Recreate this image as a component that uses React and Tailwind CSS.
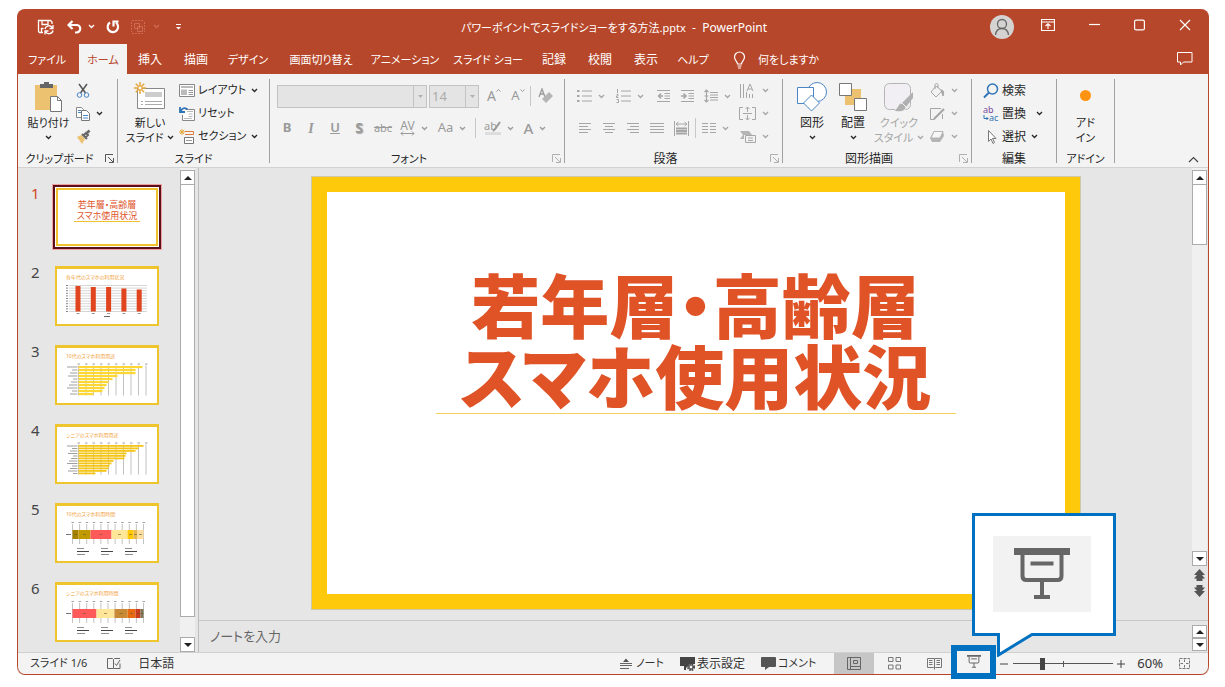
import { Fragment } from 'react';

const TABS = [
  ['ファイル', 'w-14 text-[11px]'],
  ['ホーム', 'mx-1 w-12 bg-[#f3f3f3] text-[11px] text-[#b7472a]'],
  ['挿入', '-ml-1 w-[46px]'],
  ['描画', 'w-[46px]'],
  ['デザイン', 'w-[58px] text-[11px]'],
  ['画面切り替え', 'w-[88px] text-[11px]'],
  ['アニメーション', 'w-20 text-[11px]'],
  ['スライド ショー', 'w-[86px] text-[11px]'],
  ['記録', 'w-[46px]'],
  ['校閲', 'w-[46px]'],
  ['表示', 'w-[46px]'],
  ['ヘルプ', 'w-12 text-[11px]'],
];

const SLIDES = [
  { id: 1, kind: 'title' },
  { id: 2, kind: 'column', title: '各年代のスマホの利用状況' },
  { id: 3, kind: 'bar', title: '10代のスマホ利用用途', color: '#fdd835', values: [64, 57, 57, 39, 34, 30, 28, 26, 24, 15] },
  { id: 4, kind: 'bar', title: 'シニアのスマホ利用用途', color: '#f5c518', values: [65, 60, 57, 48, 47, 46, 35, 33, 31, 30, 28, 17] },
  {
    id: 5,
    kind: 'stack',
    title: '10代のスマホ利用時間',
    values: [[6, '#a58300'], [12, '#c09a00'], [21, '#ff5a5a'], [16, '#ffe699'], [6, '#ffc800'], [4, '#e8b84a'], [6, '#ffdf9e']],
  },
  {
    id: 6,
    kind: 'stack',
    title: 'シニアのスマホ利用時間',
    values: [[24, '#ff5a5a'], [18, '#ffe699'], [13, '#c88a35'], [8, '#e86a10'], [5, '#cc3a1c'], [3, '#80765a']],
  },
];

function Svg({ w = 16, h = 16, children, className = '' }) {
  return (
    <svg width={w} height={h} viewBox={`0 0 ${w} ${h}`} fill="none" stroke="currentColor" className={`shrink-0 ${className}`} aria-hidden="true">
      {children}
    </svg>
  );
}

function Chevron({ className = '' }) {
  return (
    <Svg w={7} h={5} className={className}>
      <path d="M1 1l2.500 2.500L6 1" strokeWidth="1.300" />
    </Svg>
  );
}

function Launcher({ label, dim }) {
  return (
    <button aria-label={label} className={`absolute right-[3px] bottom-0 ${dim ? 'text-[#b0b0b0]' : 'text-[#555]'}`}>
      <Svg w={9} h={9}>
        <path d="M.5 8V.5H8M3 3l5 5M8.500 4v4.500H4" />
      </Svg>
    </button>
  );
}

function Group({ label, width, launcher, dim, children }) {
  return (
    <section className={`relative flex shrink-0 flex-col border-r border-[#a0a0a0] ${width}`}>
      <div className="flex h-[77px]">{children}</div>
      <h2 className={`h-2 text-center leading-2 whitespace-nowrap ${launcher ? 'pr-4' : ''}`}>{label}</h2>
      {launcher && <Launcher label={`${label}の設定`} dim={dim} />}
    </section>
  );
}

function BigButton({ icon, lines, chevron, inlineChevron, className = '' }) {
  return (
    <button className={`flex flex-col items-center leading-[15px] whitespace-nowrap ${className}`}>
      <span className="flex h-9 items-center">{icon}</span>
      {lines.map((line, i) => (
        <span key={line} className="flex items-center gap-1">
          {line}
          {inlineChevron && i === lines.length - 1 && <Chevron />}
        </span>
      ))}
      {chevron && <Chevron className="mt-[5px]" />}
    </button>
  );
}

function RowButton({ icon, text, chevron, gap = 'gap-[3px]', className = '' }) {
  return (
    <button className={`flex h-[23px] items-center whitespace-nowrap ${gap} ${className}`}>
      {icon}
      {text}
      {chevron && <Chevron className="ml-[2px]" />}
    </button>
  );
}

function ToolButton({ label, width = 'w-6', chevron, children }) {
  return (
    <button aria-label={label} className={`flex h-6 shrink-0 items-center justify-center gap-[6px] ${width}`}>
      {children}
      {chevron && <Chevron />}
    </button>
  );
}

function Lines({ rows }) {
  return (
    <Svg w={14} h={14}>
      {rows.map(([x1, x2], i) => (
        <path key={i} d={`M${x1} ${2.5 + i * 3}H${x2}`} />
      ))}
    </Svg>
  );
}

function Header() {
  return (
    <header className="rounded-t-lg bg-[#b7472a] text-white">
      <div className="flex h-[35px] items-center">
        <div className="flex flex-1 items-center pl-5">
          <button aria-label="上書き保存" className="w-[18px]">
            <Svg w={18} h={18}>
              <path d="M6 14.500H2.500L1.500 13.500V2.500h12l1.500 1.500V6M5 2.500v4h6v-4M4.500 14.500v-4h2" strokeWidth="1.300" />
              <path d="M8 11a4 4 0 0 1 7.500-1M16 7v3.500h-3.500M16 12.500a4 4 0 0 1-7.500 1M8 16.500v-3.500h3.500" strokeWidth="1.300" />
            </Svg>
          </button>
          <button aria-label="元に戻す" className="ml-3 flex items-center gap-[6px]">
            <Svg w={15} h={16}>
              <path d="M5.500 2L1.500 6l4 4M2 6h7.500a3.700 3.700 0 0 1 0 7.500H8" strokeWidth="2.200" />
            </Svg>
            <Chevron />
          </button>
          <button aria-label="繰り返し" className="ml-[10px]">
            <Svg w={16} h={16}>
              <path d="M5 3.500a5.200 5.200 0 1 0 6 .2M13.500 2.500H8.500v5" strokeWidth="2.200" />
            </Svg>
          </button>
          <button aria-label="グループ化" className="ml-2 flex items-center gap-[6px] text-[#cf6a54]">
            <Svg w={18} h={16}>
              <path d="M3 1.500h12M3 14.500h12M2.500 3v10M15.500 3v10" strokeDasharray="2 1" />
              <path d="M5.500 4.500h5v5h-5zM8.500 7.500h5v5h-5z" />
            </Svg>
            <Chevron />
          </button>
          <button aria-label="クイック アクセス ツール バーのカスタマイズ" className="ml-[15px]">
            <Svg w={7} h={8}>
              <path d="M1 1.500h5" />
              <path d="M1 4h5L3.500 6.500z" fill="currentColor" stroke="none" />
            </Svg>
          </button>
        </div>
        <h1 className="flex items-baseline pt-[2px] whitespace-pre">
          <span className="text-[11px]">パワーポイントでスライドショーをする方法.pptx</span>
          {'  -  PowerPoint'}
        </h1>
        <div className="flex flex-1 items-center justify-end pr-[18px]">
          <button aria-label="アカウント" className="mr-[27px] flex size-6 justify-center rounded-full bg-[#d5d3d2] text-[#666]">
            <Svg w={24} h={24}>
              <circle cx="12" cy="9" r="4.500" strokeWidth="1.300" />
              <path d="M5.500 20c.5-4.500 3-6.500 6.500-6.500s6 2 6.500 6.500" strokeWidth="1.300" />
            </Svg>
          </button>
          <button aria-label="リボンの表示オプション" className="mr-[34px]">
            <Svg w={14} h={12} className="-mt-1">
              <path d="M.5.500h13v11H.5zM.5 3h13M7 10V5M4.500 7L7 4.800 9.500 7" strokeWidth="1.200" />
            </Svg>
          </button>
          <button aria-label="最小化" className="mr-[34px]">
            <Svg w={11} h={12} className="-mt-1">
              <path d="M0 5.500h11" strokeWidth="1.200" />
            </Svg>
          </button>
          <button aria-label="最大化" className="mr-[34px]">
            <Svg w={11} h={12} className="-mt-1">
              <rect x=".6" y="1.100" width="9.800" height="9.800" rx="1.500" strokeWidth="1.200" />
            </Svg>
          </button>
          <button aria-label="閉じる">
            <Svg w={12} h={12} className="-mt-1">
              <path d="M1 1l10 10M11 1L1 11" strokeWidth="1.200" />
            </Svg>
          </button>
        </div>
      </div>
      <nav className="flex h-[30px] items-stretch pl-[2px]">
        {TABS.map(([tab, style]) => (
          <button key={tab} className={`pt-[2px] whitespace-nowrap ${style}`}>
            {tab}
          </button>
        ))}
        <button className="ml-4 flex items-center gap-3 pt-[2px] text-[11px]">
          <Svg w={13} h={18}>
            <path d="M4.500 13c0-2.500-3-3.500-3-7a5 5 0 0 1 10 0c0 3.500-3 4.500-3 7zM4.500 15h4M5 17h3" strokeWidth="1.200" />
          </Svg>
          何をしますか
        </button>
        <button aria-label="コメント" className="mr-4 ml-auto">
          <Svg w={16} h={14}>
            <path d="M.5.500h14.500v9.500H6.500L3.500 13v-3h-3z" />
          </Svg>
        </button>
      </nav>
    </header>
  );
}

function ClipboardGroup() {
  return (
    <Group label="クリップボード" width="w-[100px] text-[11px]" launcher>
      <BigButton
        className="ml-[9px] w-[43px]"
        lines={['貼り付け']}
        chevron
        icon={
          <Svg w={28} h={32}>
            <path d="M0 4h22v25H0z" fill="#ecc271" stroke="none" />
            <path d="M5 7V3h4V1h5v2h4v4z" fill="#666" stroke="none" />
            <path d="M15.500 15.500h7l4 4v11h-11z" fill="#fff" stroke="#777" />
            <path d="M22.500 15.500v4h4" stroke="#777" />
          </Svg>
        }
      />
      <div className="ml-[5px]">
        <RowButton
          icon={
            <Svg>
              <path d="M4 1l6.500 9M12 1L5.500 10" stroke="#555" strokeWidth="1.500" />
              <circle cx="4.500" cy="12" r="2.300" stroke="#4a86c6" />
              <circle cx="11.500" cy="12" r="2.300" stroke="#4a86c6" />
            </Svg>
          }
        />
        <RowButton
          chevron
          icon={
            <Svg>
              <path d="M1.500 1.500h5l2 2v8h-7z" fill="#fff" stroke="#888" />
              <path d="M6.500 4.500h5l3 3v7h-8z" fill="#fff" stroke="#777" />
              <path d="M3 4.500h3M3 6.500h3M8 9.500h5M8 12h5" stroke="#4a86c6" />
            </Svg>
          }
        />
        <RowButton
          icon={
            <Svg>
              <path d="M2 8l4-2 4 4-3 5z" fill="#ecc271" stroke="none" />
              <path d="M7 5l5 5M8.500 6.500L11 4l2 2-2.500 2.500z" stroke="#666" strokeWidth="2" />
              <path d="M12 4l2.500-2.500" stroke="#666" strokeWidth="2.500" />
            </Svg>
          }
        />
      </div>
    </Group>
  );
}

function SlideGroup() {
  return (
    <Group label="スライド" width="w-[152px] text-[11px]">
      <BigButton
        className="ml-2 w-[48px]"
        lines={['新しい', 'スライド']}
        inlineChevron
        icon={
          <Svg w={32} h={30}>
            <path d="M3.500 6.500h27v20h-27z" fill="#fff" stroke="#888" />
            <path d="M11 10h17v5H11z" fill="#ccc" stroke="none" />
            <path d="M7 19.500h2M11 19.500h17M7 22.500h2M11 22.500h17" stroke="#aaa" />
            <path d="M6 0v12M0 6h12M1.800 1.800l8.400 8.400M10.200 1.800l-8.400 8.400" stroke="#e5a83b" strokeWidth="1.500" />
            <circle cx="6" cy="6" r="2" fill="#fff" stroke="#e5a83b" />
          </Svg>
        }
      />
      <div className="ml-[5px]">
        <RowButton
          text="レイアウト"
          chevron
          icon={
            <Svg>
              <path d="M.5 1.500h15v12H.5z" fill="#fff" stroke="#888" />
              <path d="M2 3h12v2H2zM2 6.500h6V12H2z" fill="#bbb" stroke="none" />
              <path d="M9.500 7.500H14M9.500 9.500H14M9.500 11.500H14" stroke="#999" />
            </Svg>
          }
        />
        <RowButton
          text="リセット"
          icon={
            <Svg>
              <path d="M6.500 3.500h9v11h-12V9" fill="#fff" stroke="#888" />
              <path d="M8 5.500h6M9.500 8h4M9.500 10.500h4M5 12.500h8" stroke="#bbb" />
              <path d="M1 1v5h5M1.500 5.500C3 2 6 1 8.500 3.500" stroke="#2f74b5" strokeWidth="1.800" />
            </Svg>
          }
        />
        <RowButton
          text="セクション"
          chevron
          icon={
            <Svg>
              <path d="M6 2.500h8.500v3H6" stroke="#e07a3b" />
              <path d="M5.500 8.500h9v6h-9z" fill="#fff" stroke="#777" />
              <path d="M7 11.500h6" stroke="#999" />
              <path d="M3 0v6M0 3h6M1 1l4 4M5 1L1 5" stroke="#e5a83b" />
            </Svg>
          }
        />
      </div>
    </Group>
  );
}

function FontGroup() {
  return (
    <Group label="フォント" width="w-[295px] text-[11px]" launcher dim>
      <div className="flex flex-col pl-[7px] text-[#9a9a9a]">
        <div className="flex h-[34px] items-center">
          {[['フォント', '', 'w-[150px]'], ['フォント サイズ', '14', 'w-[50px] ml-[2px]']].map(([label, value, width]) => (
            <span key={label} className={`relative h-[23px] shrink-0 border border-[#c3c3c3] bg-[#e4e4e4] ${width}`}>
              <select aria-label={label} disabled className="block h-full w-full appearance-none px-[2px] text-[13px] leading-5 text-[#aaa] opacity-100">
                <option>{value}</option>
              </select>
              <span className="pointer-events-none absolute inset-y-0 right-0 flex w-[13px] items-center justify-center border-l border-[#c3c3c3]">
                <Svg w={5} h={3}>
                  <path d="M0 0h5L2.500 3z" fill="#b0b0b0" stroke="none" />
                </Svg>
              </span>
            </span>
          ))}
          <ToolButton label="フォント サイズの拡大">
            <span className="ml-[6px] text-sm">A</span>
            <Svg w={5} h={3} className="-ml-[6px] mb-3"><path d="M.5 2.500l2-2 2 2" /></Svg>
          </ToolButton>
          <ToolButton label="フォント サイズの縮小">
            <span className="ml-[6px] text-[13px]">A</span>
            <Svg w={5} h={3} className="-ml-[6px] mb-3"><path d="M.5.500l2 2 2-2" /></Svg>
          </ToolButton>
          <span className="mx-[3px] h-5 border-l border-[#c8c8c8]" />
          <ToolButton label="すべての書式をクリア">
            <Svg>
              <path d="M1 9l3-8 3 8M2 6h4" strokeWidth="1.300" />
              <path d="M4 11l7-7 4 4-7 7z" fill="#b5b5b5" stroke="none" />
            </Svg>
          </ToolButton>
        </div>
        <div className="-ml-[2px] flex h-[30px] items-center">
          <ToolButton label="太字"><b className="text-[13px]">B</b></ToolButton>
          <ToolButton label="斜体"><i className="font-['Liberation_Serif'] text-[14px] font-bold">I</i></ToolButton>
          <ToolButton label="下線"><u className="text-[13px] font-semibold">U</u></ToolButton>
          <ToolButton label="文字の影"><b className="text-sm text-shadow-[1px_1px_1px_#aaa]">S</b></ToolButton>
          <ToolButton label="取り消し線"><s className="text-[11px]">abc</s></ToolButton>
          <ToolButton label="文字の間隔" width="w-[38px]" chevron>
            <span className="flex flex-col items-center text-xs leading-[11px]">
              AV
              <Svg w={15} h={5}><path d="M1 2.500h13M3 .5l-2 2 2 2M12 .5l2 2-2 2" /></Svg>
            </span>
          </ToolButton>
          <ToolButton label="文字種の変換" width="w-[38px]" chevron><span className="text-[13px]">Aa</span></ToolButton>
          <span className="mx-1 h-5 border-l border-[#c8c8c8]" />
          <ToolButton label="蛍光ペンの色" width="w-[38px]" chevron>
            <span className="flex flex-col items-center">
              <span className="flex h-[11px] items-center text-[11px]">
                ab
                <Svg w={9} h={11} className="-ml-[5px]"><path d="M8 1L3 8 1 10" strokeWidth="2" /></Svg>
              </span>
              <span className="h-[3px] w-4 bg-[#ddd]" />
            </span>
          </ToolButton>
          <ToolButton label="フォントの色" width="w-[34px]" chevron><span className="text-[15px] leading-5 font-medium">A</span></ToolButton>
        </div>
      </div>
    </Group>
  );
}

function ParagraphGroup() {
  return (
    <Group label="段落" width="w-[218px]" launcher dim>
      <div className="flex text-[#a6a6a6]">
        <div className="flex flex-col pl-2">
          <div className="flex h-[34px] items-center">
            <ToolButton label="箇条書き" width="w-9" chevron>
              <Svg w={15} h={14}>
                <path d="M0 2h2.500M0 7h2.500M0 12h2.500" strokeWidth="2" />
                <path d="M5 2h10M5 7h10M5 12h10" />
              </Svg>
            </ToolButton>
            <ToolButton label="段落番号" width="w-[42px]" chevron>
              <Svg w={15} h={14}>
                <path d="M1.500 0v4M.500 5.500H2v1.500H.500v1.500H2.500M.500 10.500h2v3h-2" />
                <path d="M5 2h10M5 7h10M5 12h10" />
              </Svg>
            </ToolButton>
            {['M5 4.500L2.500 7 5 9.500M3 7h4', 'M3.500 4.500L6 7 3.500 9.500M1 7h5'].map((d, i) => (
              <ToolButton key={d} label={i ? 'インデントを増やす' : 'インデントを減らす'}>
                <Svg w={15} h={14}>
                  <path d="M1 1.500h13M8.500 4.500H14M8.500 7H14M8.500 9.500H14M1 12.500h13" />
                  <path d={d} strokeWidth="1.500" />
                </Svg>
              </ToolButton>
            ))}
            <ToolButton label="行間" width="w-9" chevron>
              <Svg w={14} h={14}>
                <path d="M2.500 1v12M.500 3l2-2 2 2M.500 11l2 2 2-2M.500 7h4" strokeWidth="1.200" />
                <path d="M6 3.500h8M6 6h8M6 8.500h8M6 11h8" />
              </Svg>
            </ToolButton>
          </div>
          <div className="flex h-[30px] items-center">
            <ToolButton label="左揃え"><Lines rows={[[1, 13], [1, 10], [1, 13], [1, 10]]} /></ToolButton>
            <ToolButton label="中央揃え"><Lines rows={[[1, 13], [3, 11], [1, 13], [3, 11]]} /></ToolButton>
            <ToolButton label="右揃え"><Lines rows={[[1, 13], [4, 13], [1, 13], [4, 13]]} /></ToolButton>
            <ToolButton label="両端揃え"><Lines rows={[[0, 14], [0, 14], [0, 14], [0, 14]]} /></ToolButton>
            <ToolButton label="均等割り付け">
              <Svg w={15} h={15}>
                <path d="M.500 0v15M14.500 0v15M2 3h11M4.500 1L2 3l2.500 2M10.500 1L13 3l-2.500 2" />
                <path d="M2 7.500h11M2 10h11M2 12.500h11" strokeWidth="1.800" />
              </Svg>
            </ToolButton>
            <span className="mx-[2px] h-5 border-l border-[#c8c8c8]" />
            <ToolButton label="段の追加または削除" width="w-[34px]" chevron>
              <Svg w={14} h={14}>
                <path d="M0 2.500h6M8 2.500h6M0 5.500h6M8 5.500h6M0 8.500h6M8 8.500h6M0 11.500h6M8 11.500h6" />
              </Svg>
            </ToolButton>
          </div>
        </div>
        <div className="pl-1">
          <RowButton gap="gap-1" chevron icon={<Svg w={17}><path d="M1.500 1v14M4.500 1v14M7.500 9v6M10.500 11v4M13.500 11v4M8 8l3-7 3 7M9 6h4" /></Svg>} />
          <RowButton
            gap="gap-1"
            chevron
            icon={<Svg w={17}><path d="M4 1.500H.500v12H4M13 1.500h3.500v12H13M4 7.500h9M8.500 6V1M6.500 3l2-2 2 2M8.500 9v5M6.500 12l2 2 2-2" /></Svg>}
          />
          <RowButton
            gap="gap-1"
            chevron
            icon={
              <Svg w={17}>
                <path d="M1 2h9l3 4H5v4H1l3-4z" fill="#b5b5b5" stroke="none" />
                <path d="M6.500 6.500h10v7h-10zM9 9h5M9 11.500h5" />
              </Svg>
            }
          />
        </div>
      </div>
    </Group>
  );
}

function DrawingGroup() {
  return (
    <Group label="図形描画" width="w-[189px]" launcher dim>
      <BigButton
        className="ml-[9px] w-10"
        lines={['図形']}
        chevron
        icon={
          <Svg w={32} h={30}>
            <circle cx="21" cy="10" r="9.500" fill="#fff" stroke="#4a86c6" />
            <path d="M1.500 5.500h16v16h-16z" fill="#fff" stroke="#4a86c6" />
            <path d="M15.500 13l8 8-8 8-8-8z" fill="#fff" stroke="#4a86c6" />
          </Svg>
        }
      />
      <BigButton
        className="w-[42px]"
        lines={['配置']}
        chevron
        icon={
          <Svg w={30} h={30}>
            <path d="M14 7h9v9h-9zM7 14h9v9H7z" fill="#ecc271" stroke="none" />
            <path d="M1.500 1.500h12v12h-12zM16.500 16.500h12v12h-12z" fill="#fff" stroke="#777" />
          </Svg>
        }
      />
      <BigButton
        className="w-[50px] text-[11px] text-[#a6a6a6]"
        lines={['クイック', 'スタイル']}
        inlineChevron
        icon={
          <Svg w={32} h={32}>
            <rect x="1.500" y="2.500" width="26" height="26" rx="5" fill="#f1eff3" stroke="#b5b5b5" />
            <path d="M30 11L19 22l4 4 7-9z" fill="#b0b0b0" stroke="none" />
            <path d="M19 22c-4 0-4 5-8 8 6 2 12 0 12-4z" fill="#b0b0b0" stroke="#f3f3f3" />
          </Svg>
        }
      />
      <div className="ml-[5px] text-[#a6a6a6]">
        <RowButton gap="gap-1" chevron icon={<Svg><path d="M7 3l6 5-6 6-5-5zM6 6V2c0-2 3-2 3 0v3" /><path d="M12 7c3 0 3 3 2 6z" fill="currentColor" /></Svg>} />
        <RowButton gap="gap-1" chevron icon={<Svg><path d="M12 2.500H1.500v11h4M13.500 8v5" /><path d="M15 3L7 11l-2 2" strokeWidth="2.200" /></Svg>} />
        <RowButton
          gap="gap-1"
          chevron
          icon={
            <Svg>
              <path d="M5 2h9l1 5-4 6H3L1 9z" fill="#b5b5b5" stroke="none" />
              <path d="M5 2.500h9l-3 6.500H2z" fill="#f7f7f7" stroke="#b5b5b5" />
            </Svg>
          }
        />
      </div>
    </Group>
  );
}

function EditGroup() {
  return (
    <Group label="編集" width="w-[85px]">
      <div className="ml-[11px]">
        <RowButton
          text="検索"
          icon={
            <Svg>
              <circle cx="9.500" cy="6" r="5" stroke="#2f74b5" strokeWidth="1.500" />
              <path d="M6 9.500L1 14.500" stroke="#2f74b5" strokeWidth="2" />
            </Svg>
          }
        />
        <button className="flex h-[23px] items-center gap-[3px] whitespace-nowrap">
          <span className="w-4 text-left text-[9px] leading-[8px]">
            <span className="block text-[#7a4ba0]">ab</span>
            <span className="flex items-center text-[#2f74b5]">
              <Svg w={6} h={6}><path d="M1 0v3.500h4M3.500 2l1.500 1.500L3.500 5" /></Svg>
              ac
            </span>
          </span>
          置換
          <Chevron className="ml-[7px]" />
        </button>
        <RowButton text="選択" chevron icon={<Svg><path d="M5.500 1.500v11l2.500-2.500 2 4.500 1.500-1-2-4H13z" fill="#fff" stroke="#777" /></Svg>} />
      </div>
    </Group>
  );
}

function Ribbon() {
  return (
    <div className="flex h-[94px] border-b border-[#d2d2d2] bg-[#f3f3f3] pt-[5px] pb-1 text-[#262626]">
      <ClipboardGroup />
      <SlideGroup />
      <FontGroup />
      <ParagraphGroup />
      <DrawingGroup />
      <EditGroup />
      <Group label="アドイン" width="w-[58px] text-[11px]">
        <BigButton className="w-full" lines={['アド', 'イン']} icon={<span className="mb-1 size-[11px] rounded-full bg-[#ff9312]" />} />
      </Group>
      <button aria-label="リボンを折りたたむ" className="mr-[9px] ml-auto self-end">
        <Svg w={11} h={7}><path d="M1 6l4.500-4.500L10 6" stroke="#444" strokeWidth="1.200" /></Svg>
      </button>
    </div>
  );
}

function ColumnChart() {
  const tops = [20, 21, 21, 22.5, 23.5];
  return (
    <>
      {Array.from({ length: 11 }, (_, i) => (
        <Fragment key={i}>
          <path d={`M14 ${19.5 + i * 2.6}H92`} stroke="#bbb" strokeWidth=".6" />
          <path d={`M11 ${19.5 + i * 2.6}h2`} stroke="#666" strokeWidth=".8" />
        </Fragment>
      ))}
      {tops.map((y, i) => (
        <Fragment key={i}>
          <rect x={20.5 + i * 15.3} y={y} width="5" height={45.5 - y} fill="#e0451f" stroke="none" />
          <path d={`M${21.5 + i * 15.3} 47.500h3`} stroke="#777" strokeWidth=".8" />
        </Fragment>
      ))}
      <path d="M49 50.500h6" stroke="#666" />
    </>
  );
}

function BarChart({ values, color }) {
  const step = 30 / values.length;
  return (
    <>
      {Array.from({ length: 10 }, (_, i) => (
        <Fragment key={i}>
          <path d={`M${23.5 + i * 7.5} 20.500v30`} stroke="#999" strokeWidth=".6" />
          <path d={`M${22.5 + i * 7.5} 19h2.500`} stroke="#777" strokeWidth=".7" />
        </Fragment>
      ))}
      {values.map((v, i) => (
        <Fragment key={i}>
          <rect x="23.5" y={21 + i * step} width={v} height={step * 0.72} fill={color} stroke="none" />
          <path d={`M${12 + ((i * 5) % 7)} ${22 + i * step}H22.500`} stroke="#777" strokeWidth=".7" />
        </Fragment>
      ))}
    </>
  );
}

function StackChart({ values }) {
  let x = 17.5;
  return (
    <>
      {Array.from({ length: 11 }, (_, i) => (
        <Fragment key={i}>
          <path d={`M${17.5 + i * 7.1} 21v20`} stroke="#999" strokeWidth=".6" />
          <path d={`M${16.5 + i * 7.1} 19.500h2.500`} stroke="#777" strokeWidth=".7" />
        </Fragment>
      ))}
      {values.map(([w, fill]) => {
        const left = x;
        x += w;
        return (
          <Fragment key={fill}>
            <rect x={left} y="27" width={w} height="9" fill={fill} stroke="none" />
            <path d={`M${left + w / 2 - 1.5} 31.500h3`} stroke="#6b5a30" strokeWidth=".6" />
          </Fragment>
        );
      })}
      <path d="M11 31.500h5" stroke="#777" />
      {[22, 46, 70].map((lx) => (
        <g key={lx} stroke="#444">
          <path d={`M${lx} 45.500h7`} strokeWidth=".6" />
          <path d={`M${lx} 48.500h12`} strokeWidth="1" />
          <path d={`M${lx} 51.500h8`} strokeWidth=".6" />
        </g>
      ))}
    </>
  );
}

function Thumbnail({ slide }) {
  if (slide.kind === 'title') {
    return (
      <button aria-label="スライド 1" className="-m-[3px] h-[66px] w-[110px] border border-[#f0a0a0] bg-white">
        <span className="block h-full border-2 border-[#5a1018] p-px">
          <span className="flex h-full flex-col items-center border-2 border-[#f2c12e] pt-[9px] text-[9px] leading-[11px] whitespace-nowrap text-[#e0562c]">
            <span>若年層・高齢層</span>
            <span className="border-b border-[#f2c12e] px-[3px]">スマホ使用状況</span>
          </span>
        </span>
      </button>
    );
  }
  return (
    <button aria-label={`スライド ${slide.id}`} className="relative h-[60px] w-[104px] border-2 border-t-[3px] border-[#eec52c] bg-white text-left">
      <span className="absolute top-[5px] left-[9px] text-[5px] leading-[6px] whitespace-nowrap text-[#f2a23c]">{slide.title}</span>
      <Svg w={104} h={60} className="-mt-[3px] -ml-[2px]">
        {slide.kind === 'column' && <ColumnChart />}
        {slide.kind === 'bar' && <BarChart values={slide.values} color={slide.color} />}
        {slide.kind === 'stack' && <StackChart values={slide.values} />}
      </Svg>
    </button>
  );
}

function ArrowButton({ up, label, height = 'h-[15px]' }) {
  return (
    <button aria-label={label} className={`flex w-[15px] shrink-0 items-center justify-center border border-[#ababab] bg-white ${height}`}>
      <Svg w={8} h={4}>
        <path d={up ? 'M0 4l4-4 4 4z' : 'M0 0h8L4 4z'} fill="#222" stroke="none" />
      </Svg>
    </button>
  );
}

function SlidePanel() {
  return (
    <aside className="flex w-[181px] shrink-0 border-r border-[#bdbdbd]">
      <ol className="flex flex-1 flex-col gap-[19px] overflow-hidden pt-[19px]">
        {SLIDES.map((slide) => (
          <li key={slide.id} className="flex h-[60px] shrink-0">
            <span className={`w-[37px] pl-[13px] text-[15px] leading-3 ${slide.id === 1 ? 'text-[#d24726]' : 'text-[#444]'}`}>{slide.id}</span>
            <Thumbnail slide={slide} />
          </li>
        ))}
      </ol>
      <div className="mr-[3px] flex w-[15px] flex-col bg-[#f0f0f0] pt-[2px]">
        <ArrowButton up label="上へスクロール" />
        <div className="-mt-px mb-5 flex-1 border border-[#ababab] bg-white" />
        <ArrowButton label="下へスクロール" />
      </div>
    </aside>
  );
}

function Editor() {
  return (
    <div className="flex min-w-0 flex-1 flex-col">
      <div className="flex min-h-0 flex-1">
        <div className="flex min-w-0 flex-1 justify-center pt-[9px] pb-[11px]">
          <article className="flex aspect-video h-full flex-col items-center border-[15px] border-[#ffc90b] bg-white pt-[79px] outline outline-[#cfc8a8]">
            <h2 className="w-[520px] border-b border-[#f5d060] text-center text-[69px] leading-[71px] font-black whitespace-nowrap text-[#df5327]">
              若年層・高齢層
              <br />
              スマホ使用状況
            </h2>
          </article>
        </div>
        <div className="mr-px flex w-[15px] flex-col items-center bg-[#f0f0f0] pt-[2px]">
          <ArrowButton up label="前へスクロール" />
          <div className="-mt-px h-[61px] w-full border border-[#ababab] bg-white" />
          <div className="flex-1" />
          <ArrowButton label="次へスクロール" />
          <div className="flex h-[54px] w-full flex-col items-center gap-1 bg-[#e6e6e6] pt-[3px] text-[#555]">
            <button aria-label="前のスライド">
              <Svg w={11} h={12} className="block"><path d="M5.500 0L11 6H8l3 3.500H8.500V12h-6V9.500H0L3 6H0z" fill="currentColor" stroke="none" /></Svg>
            </button>
            <button aria-label="次のスライド">
              <Svg w={11} h={12} className="block"><path d="M5.500 12L11 6H8l3-3.500H8.500V0h-6v2.500H0L3 6H0z" fill="currentColor" stroke="none" /></Svg>
            </button>
          </div>
        </div>
      </div>
      <div className="flex h-8 shrink-0 border-t border-[#c6c9c9]">
        <p className="flex-1 pl-[11px] text-[13px] leading-[30px] text-[#666]">ノートを入力</p>
        <div className="mr-px flex flex-col pt-1">
          <ArrowButton up label="ノートを上へ" height="h-[13px]" />
          <ArrowButton label="ノートを下へ" height="h-[13px]" />
        </div>
      </div>
    </div>
  );
}

function ScreenIcon({ w, h }) {
  return (
    <svg width={w} height={h} viewBox="0 0 56 52" fill="none" stroke="#666" aria-hidden="true">
      <path d="M0 3.500h56" strokeWidth="7" />
      <path d="M8.500 6v22q0 4 4 4h31q4 0 4-4V6M28 32v16M20 49h16" strokeWidth="4" />
      <path d="M16.500 15.500h23" strokeWidth="4" />
    </svg>
  );
}

function SlideShowButton() {
  return (
    <div className="relative mb-1">
      <div className="absolute bottom-[43px] left-[21px] h-[123px] w-[144px] border-[3px] border-[#0070c0] bg-white py-[20px] pr-[22px] pl-[18px]">
        <div className="flex h-[76px] items-center justify-center bg-[#f2f2f2]">
          <ScreenIcon w={56} h={52} />
        </div>
        <svg width="40" height="24" viewBox="0 0 40 24" className="absolute top-[117px] left-[20px]" aria-hidden="true">
          <path d="M3 0v22L37 1.500V0z" fill="#fff" />
          <path d="M0 1.500h3.500V22L37 1.500H40" fill="none" stroke="#0070c0" strokeWidth="3" />
        </svg>
      </div>
      <button aria-label="スライド ショー" className="relative flex h-[34px] w-[45px] items-center justify-center border-[6px] border-[#0070c0] bg-[#f3f3f3]">
        <ScreenIcon w={14} h={13} />
      </button>
    </div>
  );
}

function StatusBar() {
  return (
    <footer className="flex h-[22px] shrink-0 items-center rounded-b-lg border-t border-[#d0d0d0] bg-[#f3f3f3] pl-3 text-[#333]">
      <span className="text-[11px] whitespace-nowrap">スライド 1/6</span>
      <button aria-label="スペル チェック" className="ml-[19px]">
        <Svg w={15} h={13} className="text-[#666]">
          <path d="M7.500 11.500H1.500v-10h5l1 1 1-1h5.500M7.500 2.500v9M14 6.500v5H8M9 6.500l1.500 2L14 3" />
        </Svg>
      </button>
      <button className="ml-[17px]">日本語</button>
      <button className="mr-4 ml-auto flex items-center gap-1 text-[11px]">
        <Svg w={12} h={11}>
          <path d="M3 4L6 .5 9 4z" fill="#555" stroke="none" />
          <path d="M0 5.500h12M0 7.500h12M0 10.500h9" stroke="#666" />
        </Svg>
        ノート
      </button>
      <button className="mr-4 flex items-center gap-px">
        <Svg>
          <path d="M0 1h15v7h-5l-4 4v2H4v-4H0z" fill="#444" stroke="none" />
          <circle cx="11" cy="11" r="3" fill="#f3f3f3" stroke="#444" strokeWidth="2" strokeDasharray="1.600 .8" />
          <circle cx="11" cy="11" r="2" stroke="#444" />
        </Svg>
        表示設定
      </button>
      <button className="mr-[18px] flex items-center gap-[2px] text-[11px]">
        <Svg w={15} h={13}><path d="M1 0h13q1 0 1 1v8q0 1-1 1H8l-4 3v-3H1q-1 0-1-1V1q0-1 1-1z" fill="#555" stroke="none" /></Svg>
        コメント
      </button>
      <button aria-label="標準" className="flex h-full w-10 items-center justify-center bg-[#c6c6c6] text-[#666]">
        <Svg w={14} h={14}><path d="M.5.500h13v12H.500zM3.500.500v12M3.500 9.500h10M6.500 3.500h4v3h-4z" /></Svg>
      </button>
      <button aria-label="スライド一覧" className="flex w-10 justify-center text-[#777]">
        <Svg w={13} h={13}><path d="M.5.500h4.500v4H.500zM8 .500h4.500v4H8zM.5 8h4.500v4H.500zM8 8h4.500v4H8z" /></Svg>
      </button>
      <button aria-label="閲覧表示" className="flex w-[37px] justify-center pl-[3px] text-[#777]">
        <Svg w={15} h={13}><path d="M7.500 1.500v11M7.500 1.500H.500v9h6l1 1 1-1h6v-9zM2 3.500h3.500M2 5.500h3.500M2 7.500h3.500M9.500 3.500H13M9.500 5.500H13M9.500 7.500H13" /></Svg>
      </button>
      <SlideShowButton />
      <button aria-label="縮小" className="ml-1">
        <Svg w={8} h={8}><path d="M0 4h8" stroke="#444" /></Svg>
      </button>
      <label className="relative ml-[5px] flex h-3 w-[100px] items-center">
        <span className="absolute left-1/2 h-[6px] border-l border-[#555]" />
        <input
          type="range"
          aria-label="ズーム"
          defaultValue="28"
          className="relative h-px w-full appearance-none bg-[#555] [&::-webkit-slider-thumb]:h-3 [&::-webkit-slider-thumb]:w-[5px] [&::-webkit-slider-thumb]:appearance-none [&::-webkit-slider-thumb]:bg-[#444]"
        />
      </label>
      <button aria-label="拡大" className="ml-1">
        <Svg w={8} h={8}><path d="M0 4h8M4 0v8" stroke="#444" /></Svg>
      </button>
      <button className="ml-3 text-[13px]">60%</button>
      <button aria-label="ウィンドウに合わせる" className="mr-[18px] ml-4 text-[#777]">
        <Svg w={11} h={11}><path d="M.5.500h10v10H.500zM5.500 1.500v2.500M5.500 7v2.500M1.500 5.500H4M7 5.500h2.500" strokeDasharray="3 1" /></Svg>
      </button>
    </footer>
  );
}

export default function App() {
  return (
    <div
      lang="ja"
      className="flex h-screen flex-col bg-white pt-[9px] pr-4 pb-3 pl-[17px] font-['Noto_Sans','Noto_Sans_CJK_JP',sans-serif] text-[12px] [font-feature-settings:'palt']"
    >
      <div className="flex min-h-0 flex-1 flex-col rounded-lg border-b border-[#b7472a] bg-[#e6e6e6]">
        <Header />
        <div className="flex min-h-0 flex-1 flex-col rounded-b-lg border-x border-[#b7472a]">
          <Ribbon />
          <main className="flex min-h-0 flex-1">
            <SlidePanel />
            <Editor />
          </main>
          <StatusBar />
        </div>
      </div>
    </div>
  );
}
